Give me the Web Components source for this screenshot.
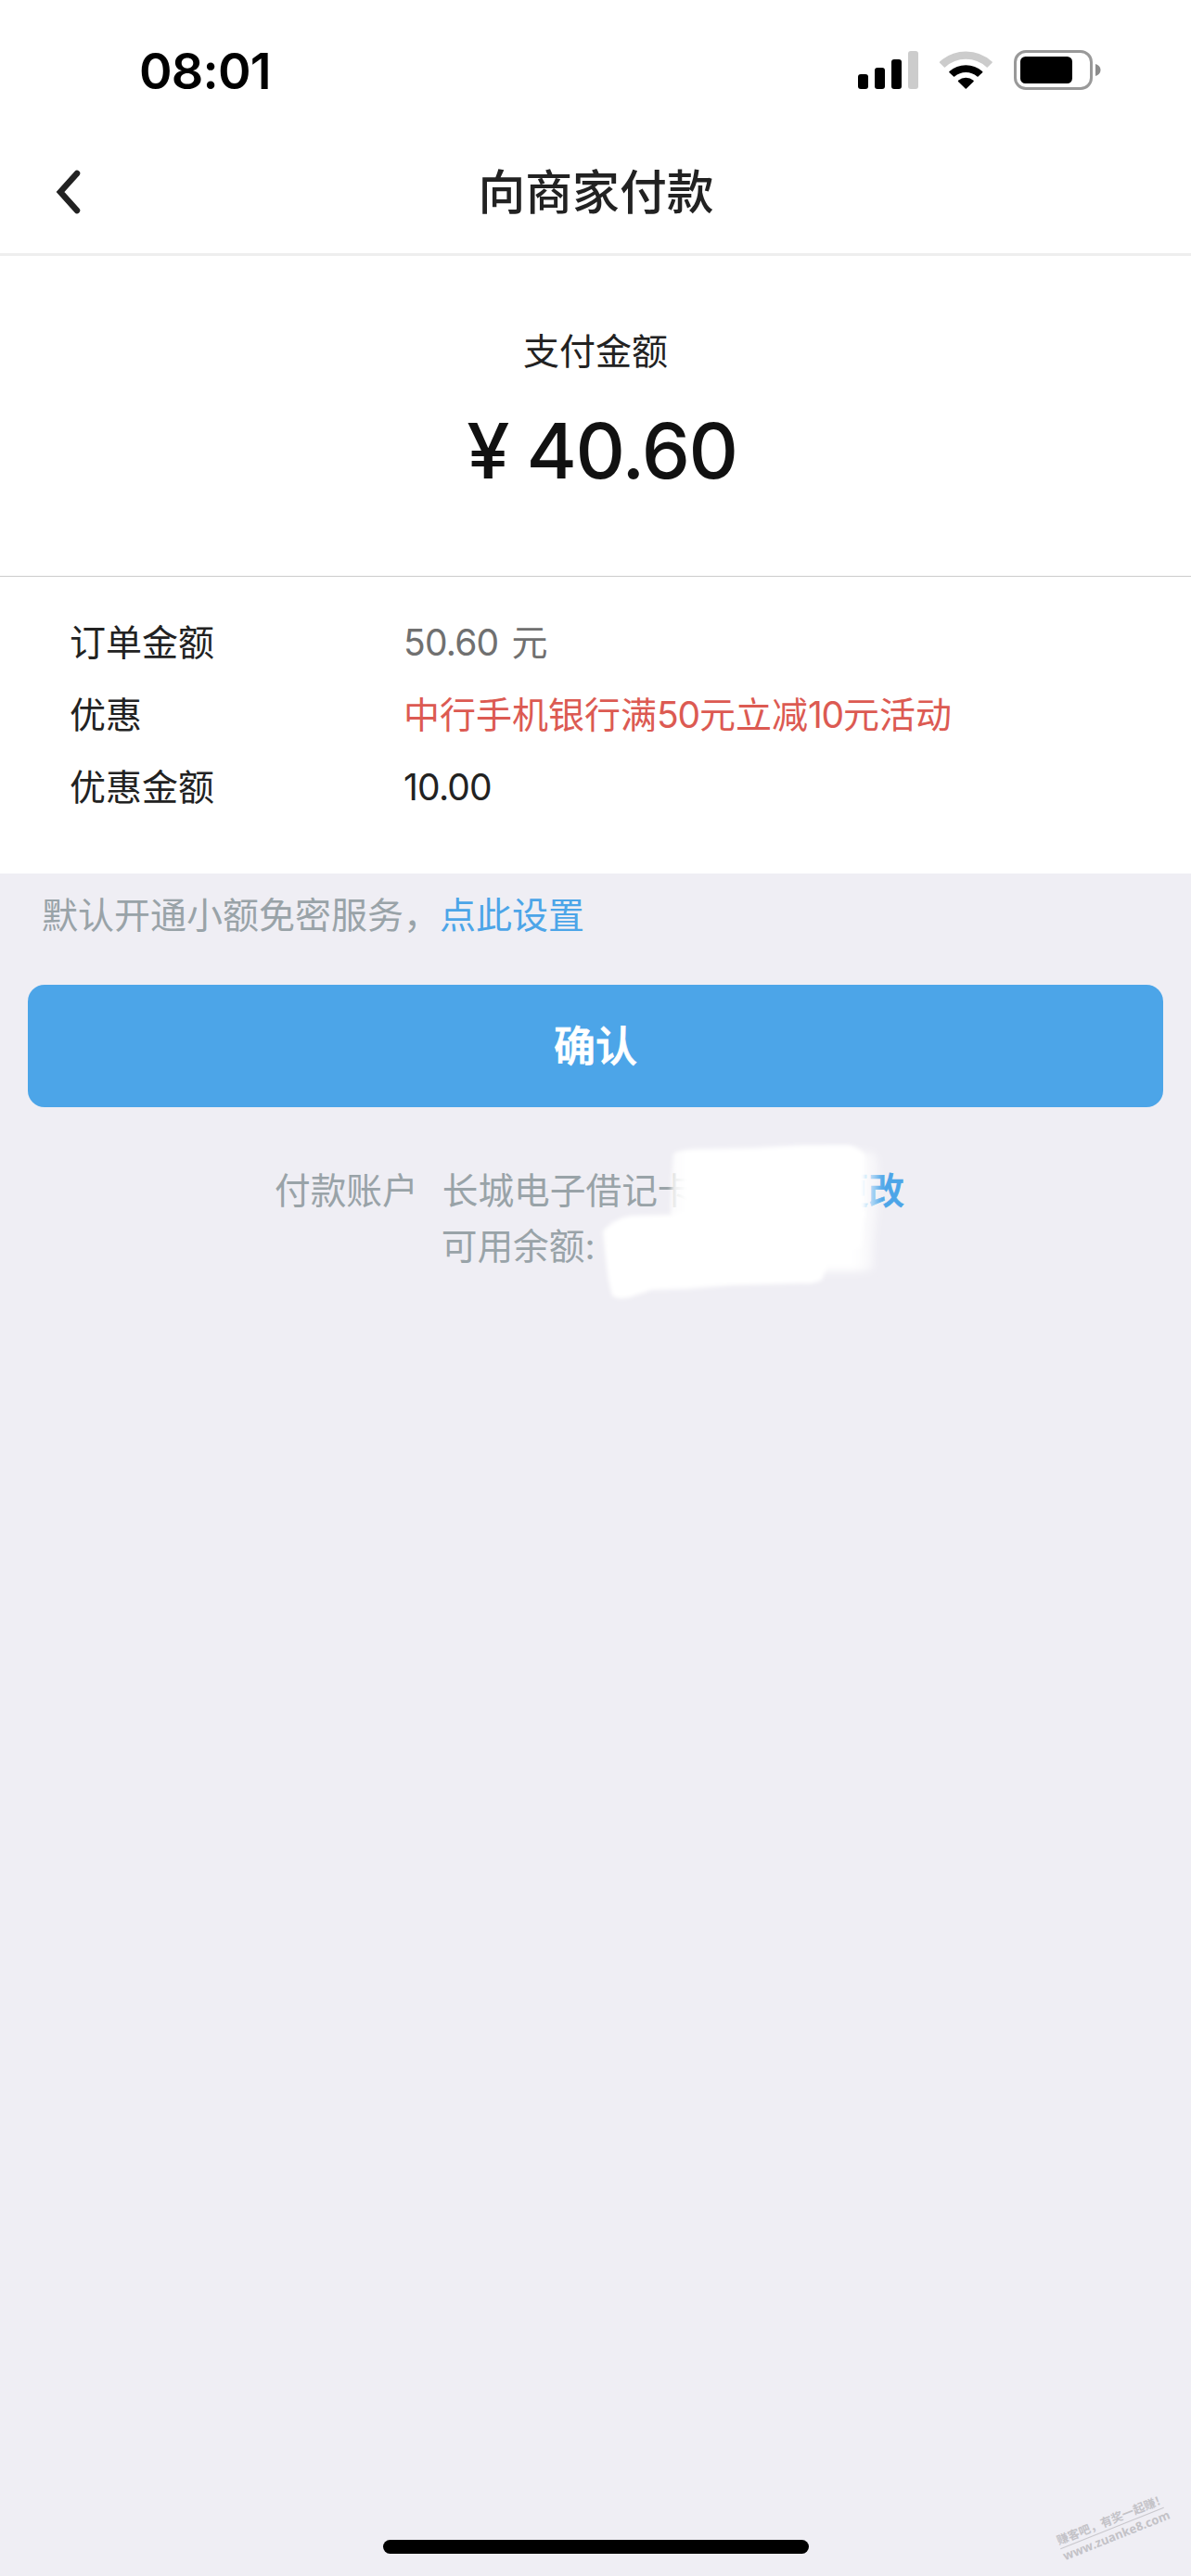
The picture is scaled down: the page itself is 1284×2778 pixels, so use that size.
<!DOCTYPE html>
<html lang="zh-CN">
<head>
<meta charset="utf-8">
<title>向商家付款</title>
<style>
html, body { margin: 0; padding: 0; }
body { width: 1284px; height: 2778px; overflow: hidden; background: #efeef4; font-family: Inter, "Noto Sans CJK SC", sans-serif; color: #222; }
</style>
</head>
<body>
<pay-page></pay-page>
<script>
const define = (name, html) => {
  const t = document.createElement('template');
  t.innerHTML = html;
  customElements.define(name, class extends HTMLElement {
    constructor() {
      super();
      this.attachShadow({ mode: 'open' }).appendChild(t.content.cloneNode(true));
    }
  });
};

define('status-bar', `
<style>
:host { display: flex; justify-content: space-between; height: 141px; box-sizing: border-box; padding: 44px 97px 0 150px; background: #fff; color: #000; }
.time { font-size: 54px; font-weight: 600; line-height: 66px; letter-spacing: -.8px; height: 66px; }
svg { display: block; margin-top: 4px; }
</style>
<span class="time"><slot></slot></span>
<svg width="264" height="56" viewBox="923 48 264 56">
  <rect x="925" y="80" width="11" height="16" rx="3"/>
  <rect x="943" y="73" width="11" height="23" rx="3"/>
  <rect x="961" y="64" width="11" height="32" rx="3"/>
  <rect x="979" y="55" width="11" height="41" rx="3" fill="#ccc"/>
  <g stroke-linejoin="round" stroke-width="1.6">
    <path fill="#ccc" stroke="#ccc" d="M1013.6 67.2A40.6 40.6 0 0 1 1069 67.2L1064.2 71.8A33.8 33.8 0 0 0 1018.4 71.8Z"/>
    <path fill="#000" stroke="#000" d="M1024 77.6A26 26 0 0 1 1058.6 77.6L1054 82A19.4 19.4 0 0 0 1028.6 82Z"/>
    <path fill="#000" stroke="#000" d="M1033.6 87.4A12.2 12.2 0 0 1 1049 87.4L1041.3 95Z"/>
  </g>
  <rect x="1094.5" y="55.5" width="82" height="40" rx="11.5" fill="none" stroke="#999" stroke-width="3"/>
  <rect x="1100" y="61" width="56" height="29" rx="5.5"/>
  <path fill="#8c8c8c" d="M1181 69C1184.5 70 1186.5 72.5 1186.5 75.5S1184.5 81 1181 82Z"/>
</svg>`);

define('nav-header', `
<style>
:host { display: grid; grid-template-columns: 1fr auto 1fr; align-items: center; height: 135px; box-sizing: border-box; border-bottom: 3px solid #eee; background: #fff; }
svg { display: block; margin-left: 57px; }
h1 { margin: 2px 0 0 1px; font-size: 50.8px; font-weight: 500; line-height: 72px; color: #222; }
</style>
<svg width="32" height="54" viewBox="0 0 32 54"><path d="M26 7L8 27L26 47" fill="none" stroke="#222" stroke-width="6.5" stroke-linecap="round" stroke-linejoin="miter"/></svg>
<h1><slot></slot></h1>`);

define('amount-panel', `
<style>
:host { display: flex; flex-direction: column; align-items: center; height: 346px; box-sizing: border-box; border-bottom: 1px solid #ccc; padding-top: 73px; background: #fff; }
.cap { font-size: 39px; line-height: 60px; color: #222; }
.sum { display: flex; gap: 18px; margin: 27px 0 0 14px; font-size: 83px; font-weight: 500; line-height: 100px; color: #111; }
.num { letter-spacing: -1.5px; }
</style>
<span class="cap"><slot></slot></span>
<div class="sum"><span>¥</span><span class="num"><slot name="value"></slot></span></div>`);

define('detail-list', `
<style>
:host { display: flex; flex-direction: column; height: 320px; box-sizing: border-box; padding: 32px 75px 0; background: #fff; }
</style><slot></slot>`);

define('detail-row', `
<style>
:host { display: flex; height: 78px; line-height: 78px; font-size: 39px; color: var(--value, #222); }
.label { width: 360px; color: #222; }
.value { white-space: pre; letter-spacing: var(--track, -.8px); word-spacing: 4px; }
::slotted(b) { font-weight: 400; letter-spacing: -1.2px; }
</style>
<span class="label"><slot name="label"></slot></span><span class="value"><slot></slot></span>`);

define('service-note', `
<style>
:host { display: flex; height: 120px; box-sizing: border-box; padding: 15px 45px 0; font-size: 39px; line-height: 60px; color: #99a3a8; }
::slotted(a) { color: #4ca5e8; }
</style><slot></slot>`);

define('confirm-button', `
<style>
:host { display: block; padding: 0 30px; }
button { display: flex; align-items: center; justify-content: center; width: 100%; height: 132px; border: 0; border-radius: 18px; padding: 2px 0 0; background: #4ca5e8; color: #fff; font: 500 45px/64px Inter, "Noto Sans CJK SC", sans-serif; -webkit-text-stroke: .8px #fff; }
</style><button><slot></slot></button>`);

define('account-info', `
<style>
:host { display: flex; gap: 26px; position: relative; margin-top: 60px; padding-left: 296px; font-size: 38.7px; line-height: 60px; color: #99a3a8; }
.line { display: flex; }
.balance { margin-left: -1px; }
.change { margin-left: 150px; color: #4ca5e8; font-weight: 500; -webkit-text-stroke: .7px #4ca5e8; }
svg { position: absolute; left: 630px; top: -34px; }
</style>
<span><slot name="label"></slot></span>
<div>
  <div class="line"><span><slot name="card"></slot></span><span class="change"><slot name="change"></slot></span></div>
  <div class="line balance"><slot name="balance"></slot></div>
</div>
<svg width="340" height="200" viewBox="630 1220 340 200">
  <defs><filter id="soft" x="-10%" y="-10%" width="120%" height="120%"><feGaussianBlur stdDeviation="2.2"/></filter>
  <filter id="wide" x="-10%" y="-10%" width="120%" height="120%"><feGaussianBlur stdDeviation="4"/></filter>
  <linearGradient id="fade" gradientUnits="userSpaceOnUse" x1="920" x2="954" y1="0" y2="0"><stop offset="0" stop-color="#fff"/><stop offset="1" stop-color="#fff" stop-opacity=".25"/></linearGradient>
  <linearGradient id="edge" gradientUnits="userSpaceOnUse" x1="722" x2="740" y1="0" y2="0"><stop offset="0" stop-color="#fff" stop-opacity=".75"/><stop offset="1" stop-color="#fff"/></linearGradient></defs>
  <path filter="url(#wide)" fill="url(#fade)" d="M890 1240L942 1243Q948 1250 947 1268L946 1310Q942 1325 941 1368Q938 1371 925 1371L880 1371Z"/>
  <path filter="url(#soft)" fill="url(#edge)" d="M726 1244Q734 1239 760 1239L812 1238L865 1235L915 1235Q926 1237 932 1246L932 1312L740 1330L723 1310L724 1270Z"/>
  <path filter="url(#soft)" fill="#fff" d="M740 1306L932 1306L928 1345L893 1358L890 1370L886 1380Q880 1385 864 1384L790 1386L740 1390L703 1391L679 1399Q665 1402 660 1397Q656 1384 654 1366L650 1328Q660 1315 680 1311L723 1310Z"/>
</svg>`);

define('site-mark', `
<style>
:host { position: absolute; left: 1139px; top: 2709px; width: 120px; transform: rotate(-21.8deg); color: #c3c2c7; font-weight: 700; white-space: nowrap; }
.a { display: block; font-size: 12.6px; line-height: 17px; border-bottom: 1px solid #c8c7cc; }
.b { display: block; font: 700 13px/17px "Open Sans", sans-serif; }
</style><span class="a"><slot></slot></span><span class="b"><slot name="url"></slot></span>`);

define('home-bar', `
<style>
:host { display: block; width: 459px; height: 15px; margin: auto auto 24px; border-radius: 8px; background: #000; }
</style>`);

define('pay-page', `
<style>
:host { display: flex; flex-direction: column; position: relative; width: 1284px; height: 2778px; background: #efeef4; }
.grey { --value: #707070; }
.red { --value: #dc5a52; --track: 0; }
</style>
<status-bar>08:01</status-bar>
<nav-header>向商家付款</nav-header>
<amount-panel>支付金额<span slot="value">40.60</span></amount-panel>
<detail-list>
  <detail-row class="grey"><span slot="label">订单金额</span>50.60 元</detail-row>
  <detail-row class="red"><span slot="label">优惠</span>中行手机银行满<b>50</b>元立减<b>10</b>元活动</detail-row>
  <detail-row><span slot="label">优惠金额</span>10.00</detail-row>
</detail-list>
<service-note><span>默认开通小额免密服务，</span><a>点此设置</a></service-note>
<confirm-button>确认</confirm-button>
<account-info><span slot="label">付款账户</span><span slot="card">长城电子借记卡</span><span slot="change">更改</span><span slot="balance">可用余额:</span></account-info>
<home-bar></home-bar>
<site-mark>赚客吧，有奖一起赚！<span slot="url">www.zuanke8.com</span></site-mark>`);
</script>
</body>
</html>
